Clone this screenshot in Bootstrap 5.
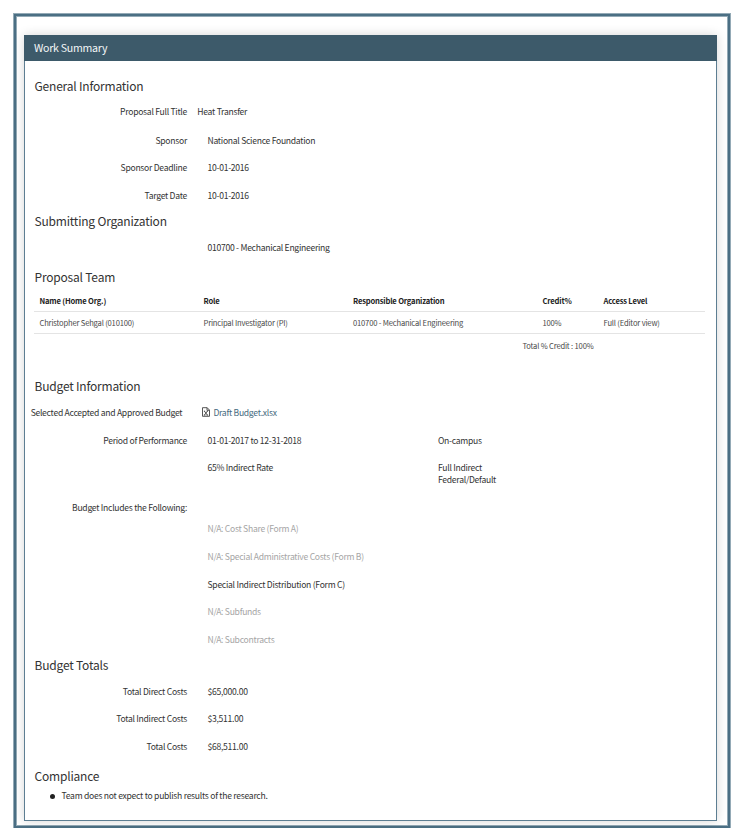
<!DOCTYPE html>
<html lang="en">
<head>
<meta charset="utf-8">
<title>Work Summary</title>
<link href="https://cdn.jsdelivr.net/npm/bootstrap@5.3.0/dist/css/bootstrap.min.css" rel="stylesheet">
<style>
body{font-family:"Noto Sans CJK SC",sans-serif;font-size:8.6px;letter-spacing:-.28px;line-height:12px;color:#333;background:#fff}
.page-frame{width:716px;height:814px;margin:14px 0 0 14px;border:2px solid #4b6f84;box-shadow:0 0 0 1px #94aab6,inset 0 0 0 1px #94aab6;padding:19px 0 0 8px}
.panel{width:693px;height:786px;border:1px solid #5d7e92;box-shadow:0 0 10px rgba(0,0,0,.16);background:#fff}
.panel-head{height:26px;background:#3d5a6a;color:#f4f7f8;font-size:10.6px;letter-spacing:-.26px;padding-left:10px;margin:-1px -1px 13px}
.sec{font-size:12px;letter-spacing:-.2px;line-height:24px;height:24px;margin:0;padding-left:9.5px;font-weight:400;color:#333}
.line{height:27.7px;padding-top:7.5px}
.line-first{height:28px;padding-top:6.8px}
.line-short{height:21.2px;padding-top:7px}
.line-tall{height:39.8px}
.lbl{width:162px;text-align:right;flex:none}
.val{margin-left:20.5px}
.val-near{margin-left:10.3px}
.val-wide{width:230.5px;flex:none}
.lbl-wide{width:157.3px;white-space:nowrap}
.team{width:671px;margin:1px 0 0 9px;font-size:7.6px;letter-spacing:-.175px;color:#484848;table-layout:fixed}
.team>:not(caption)>*>*{padding:0 0 0 5.5px;line-height:21px;height:22px;color:inherit;border-bottom:1px solid #e4e4e4;white-space:nowrap}
.team thead th{color:#222}
.team tfoot td{border:0!important}
.team tfoot td:first-child{padding-right:4.5px}
.sec-budget{margin-top:18.7px}
.off{color:#a5a5a5!important}
.doc-link{color:#466a80;margin-left:19.8px}
.doc-icon{margin:1.5px 3.3px 0 0}
.dot{width:5px;height:5px;border-radius:50%;background:#222;margin:3px 7px 0 24.5px}
.sec-compliance{margin-top:4px}
.findings{padding-top:1px}
</style>
<script src="https://cdn.jsdelivr.net/npm/bootstrap@5.3.0/dist/js/bootstrap.bundle.min.js"></script>
</head>
<body>
<main class="page-frame"><section class="panel">
<header class="panel-head d-flex align-items-center">Work Summary</header>

<h2 class="sec">General Information</h2>
<div class="line line-first d-flex"><div class="lbl">Proposal Full Title</div><div class="val-near">Heat Transfer</div></div>
<div class="line d-flex"><div class="lbl">Sponsor</div><div class="val">National Science Foundation</div></div>
<div class="line d-flex"><div class="lbl">Sponsor Deadline</div><div class="val">10-01-2016</div></div>
<div class="line d-flex"><div class="lbl">Target Date</div><div class="val">10-01-2016</div></div>

<h2 class="sec">Submitting Organization</h2>
<div class="line d-flex"><div class="lbl"></div><div class="val">010700 - Mechanical Engineering</div></div>

<h2 class="sec mt-1">Proposal Team</h2>
<table class="table team">
<colgroup><col style="width:164px"><col style="width:149.5px"><col style="width:189.5px"><col style="width:61px"><col></colgroup>
<thead><tr><th>Name (Home Org.)</th><th>Role</th><th>Responsible Organization</th><th>Credit%</th><th>Access Level</th></tr></thead>
<tbody><tr><td>Christopher Sehgal (010100)</td><td>Principal Investigator (PI)</td><td>010700 - Mechanical Engineering</td><td>100%</td><td>Full (Editor view)</td></tr></tbody>
<tfoot><tr><td colspan="4" class="text-end">Total % Credit : 100%</td><td></td></tr></tfoot>
</table>

<h2 class="sec sec-budget">Budget Information</h2>
<div class="line d-flex"><div class="lbl lbl-wide">Selected Accepted and Approved Budget</div>
<div class="d-flex align-items-start doc-link"><svg class="doc-icon" width="8" height="10" viewBox="0 0 8 10" fill="none" stroke="#444" stroke-width=".9"><path d="M.5.7h4.7l2.3 2.4v6.2H.5zM5 .8v2.5h2.4M2.4 4.2l3 3.9M5.4 4.2l-3 3.9M1.8 8.1h1.5M4.6 8.1h1.5M1.9 4.2h1.2M4.7 4.2h1.2"/></svg>Draft Budget.xlsx</div></div>
<div class="line d-flex"><div class="lbl">Period of Performance</div><div class="val val-wide">01-01-2017 to 12-31-2018</div><div>On-campus</div></div>
<div class="line line-tall d-flex"><div class="lbl"></div><div class="val val-wide">65% Indirect Rate</div><div>Full Indirect<br>Federal/Default</div></div>
<div class="line line-short d-flex"><div class="lbl">Budget Includes the Following:</div></div>
<div class="line d-flex off"><div class="lbl"></div><div class="val">N/A: Cost Share (Form A)</div></div>
<div class="line d-flex off"><div class="lbl"></div><div class="val">N/A: Special Administrative Costs (Form B)</div></div>
<div class="line d-flex"><div class="lbl"></div><div class="val">Special Indirect Distribution (Form C)</div></div>
<div class="line d-flex off"><div class="lbl"></div><div class="val">N/A: Subfunds</div></div>
<div class="line d-flex off"><div class="lbl"></div><div class="val">N/A: Subcontracts</div></div>

<h2 class="sec">Budget Totals</h2>
<div class="line d-flex"><div class="lbl">Total Direct Costs</div><div class="val">$65,000.00</div></div>
<div class="line d-flex"><div class="lbl">Total Indirect Costs</div><div class="val">$3,511.00</div></div>
<div class="line d-flex"><div class="lbl">Total Costs</div><div class="val">$68,511.00</div></div>

<h2 class="sec sec-compliance">Compliance</h2>
<ul class="list-unstyled mb-0 findings"><li class="d-flex align-items-center"><span class="dot"></span>Team does not expect to publish results of the research.</li></ul>
</section></main>
</body></html>
